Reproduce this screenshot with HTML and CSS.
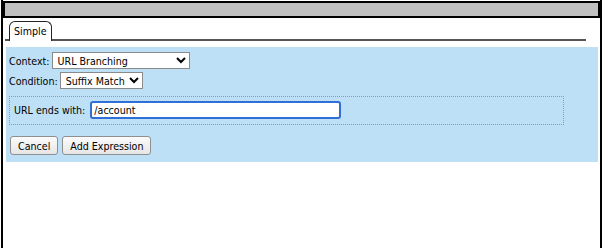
FILE: index.html
```html
<!DOCTYPE html>
<html lang="en">
<head>
    <meta charset="UTF-8">
    <title>Expression Editor</title>
    <link rel="stylesheet" href="styles.css">
</head>
<body>
    <div class="window">
        <div class="titlebar"></div>

        <ul class="tabs">
            <li class="tab active">Simple</li>
        </ul>

        <form class="panel">
            <div class="row">
                <label for="context">Context:</label>
                <select id="context" class="context-select">
                    <option>URL Branching</option>
                </select>
            </div>
            <div class="row">
                <label for="condition">Condition:</label>
                <select id="condition" class="condition-select">
                    <option>Suffix Match</option>
                </select>
            </div>

            <fieldset class="criteria">
                <label for="suffix">URL ends with:</label>
                <input type="text" id="suffix" class="suffix-input" value="/account">
            </fieldset>

            <div class="actions">
                <button type="button">Cancel</button>
                <button type="button">Add Expression</button>
            </div>
        </form>
    </div>
</body>
</html>
```

FILE: styles.css
```css
/* base */
html, body {
    height: 100%;
}

body {
    margin: 0;
    background: #fff;
    font-family: "DejaVu Sans Condensed", "DejaVu Sans", sans-serif;
    font-size: 10.6px;
    color: #000;
}

/* outer frame */
.window {
    box-sizing: border-box;
    height: 100%;
    margin: 0 0 0 1px;
    width: 601px;
    border-left: 2px solid #000;
    border-right: 2px solid #000;
    padding: 1px 0 0;
}

.titlebar {
    height: 13px;
    background: #c0c0c0;
    border: 2px solid #000;
}

/* tabs */
.tabs {
    list-style: none;
    margin: 3px 14px 0 2px;
    padding: 0 0 0 4px;
    display: flex;
    border-bottom: 2px solid #555;
    height: 18px;
}

.tab {
    box-sizing: border-box;
    height: 20px;
    padding: 3px 4px 0;
    border: 1px solid #222;
    border-bottom: none;
    border-radius: 6px 6px 0 0;
    background: #fff;
}

/* blue panel */
.panel {
    margin: 6px 2px 0 3px;
    padding: 5px 3px 6px;
    background: #bee0f7;
}

.row {
    display: flex;
    align-items: center;
    gap: 2px;
    margin-bottom: 3px;
}

select {
    font-family: inherit;
    font-size: inherit;
    height: 17px;
    padding: 0 1px;
    border: 1px solid #8a8a8a;
    border-radius: 0;
    background: #fff;
    color: #000;
}

.context-select {
    width: 138px;
}

.condition-select {
    width: 83px;
}

.criteria {
    margin: 7px 31px 0 0;
    padding: 4px 4px 5px;
    border: 1px dotted #999;
    display: flex;
    align-items: center;
    gap: 5px;
}

.suffix-input {
    box-sizing: border-box;
    width: 251px;
    height: 18px;
    padding: 0 2px;
    font-family: inherit;
    font-size: inherit;
    border: 2px solid #2f6fd6;
    border-radius: 3px;
    outline: none;
}

.actions {
    display: flex;
    gap: 4px;
    margin-top: 11px;
    padding-left: 1px;
    padding-bottom: 1px;
}

button {
    font-family: inherit;
    font-size: inherit;
    height: 19px;
    padding: 0 7px;
    border: 1px solid #8f8f8f;
    border-radius: 3px;
    background: linear-gradient(#fbfbfb, #e6e6e6);
    color: #000;
}
```
